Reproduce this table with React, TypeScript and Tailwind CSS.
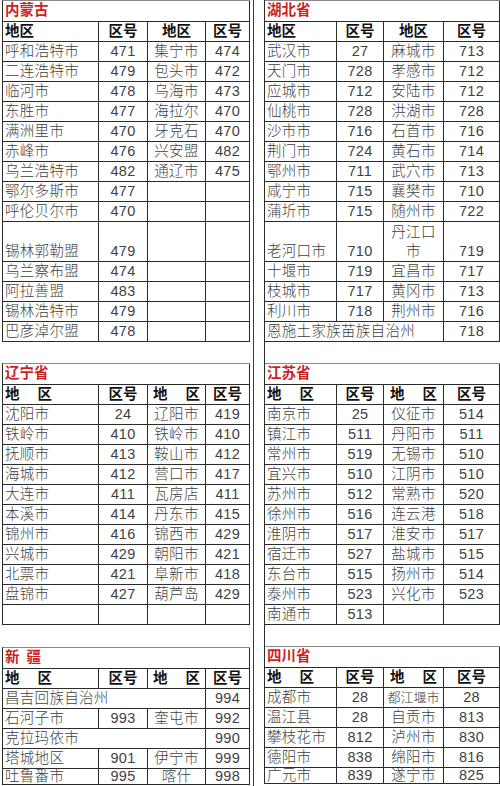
import React from 'react';

type Side = 'left' | 'right';
type RowDef = { c: string[]; h?: 'tall' | 'last'; small?: boolean };
type SectionDef = {
  title: React.ReactNode;
  spaced: boolean;
  rows: RowDef[];
};

const GRID: Record<Side, string> = {
  left: 'grid-cols-[96px_49px_58px_44px]',
  right: 'grid-cols-[72px_47px_60px_56px]',
};

const FONT = "font-['Liberation_Sans','Noto_Sans_CJK_SC',sans-serif]";

const r = (...c: string[]): RowDef => ({ c });

const neimenggu: SectionDef = {
  title: '内蒙古',
  spaced: false,
  rows: [
    r('呼和浩特市', '471', '集宁市', '474'),
    r('二连浩特市', '479', '包头市', '472'),
    r('临河市', '478', '乌海市', '473'),
    r('东胜市', '477', '海拉尔', '470'),
    r('满洲里市', '470', '牙克石', '470'),
    r('赤峰市', '476', '兴安盟', '482'),
    r('乌兰浩特市', '482', '通辽市', '475'),
    r('鄂尔多斯市', '477', '', ''),
    r('呼伦贝尔市', '470', '', ''),
    { c: ['锡林郭勒盟', '479', '', ''], h: 'tall' },
    r('乌兰察布盟', '474', '', ''),
    r('阿拉善盟', '483', '', ''),
    r('锡林浩特市', '479', '', ''),
    r('巴彦淖尔盟', '478', '', ''),
  ],
};

const hubei: SectionDef = {
  title: '湖北省',
  spaced: false,
  rows: [
    r('武汉市', '27', '麻城市', '713'),
    r('天门市', '728', '孝感市', '712'),
    r('应城市', '712', '安陆市', '712'),
    r('仙桃市', '728', '洪湖市', '728'),
    r('沙市市', '716', '石首市', '716'),
    r('荆门市', '724', '黄石市', '714'),
    r('鄂州市', '711', '武穴市', '713'),
    r('咸宁市', '715', '襄樊市', '710'),
    r('蒲圻市', '715', '随州市', '722'),
    { c: ['老河口市', '710', '丹江口\n市', '719'], h: 'tall' },
    r('十堰市', '719', '宜昌市', '717'),
    r('枝城市', '717', '黄冈市', '713'),
    r('利川市', '718', '荆州市', '716'),
    r('恩施土家族苗族自治州', '718'),
  ],
};

const liaoning: SectionDef = {
  title: '辽宁省',
  spaced: true,
  rows: [
    r('沈阳市', '24', '辽阳市', '419'),
    r('铁岭市', '410', '铁岭市', '410'),
    r('抚顺市', '413', '鞍山市', '412'),
    r('海城市', '412', '营口市', '417'),
    r('大连市', '411', '瓦房店', '411'),
    r('本溪市', '414', '丹东市', '415'),
    r('锦州市', '416', '锦西市', '429'),
    r('兴城市', '429', '朝阳市', '421'),
    r('北票市', '421', '阜新市', '418'),
    r('盘锦市', '427', '葫芦岛', '429'),
    r('', '', '', ''),
  ],
};

const jiangsu: SectionDef = {
  title: '江苏省',
  spaced: true,
  rows: [
    r('南京市', '25', '仪征市', '514'),
    r('镇江市', '511', '丹阳市', '511'),
    r('常州市', '519', '无锡市', '510'),
    r('宜兴市', '510', '江阴市', '510'),
    r('苏州市', '512', '常熟市', '520'),
    r('徐州市', '516', '连云港', '518'),
    r('淮阴市', '517', '淮安市', '517'),
    r('宿迁市', '527', '盐城市', '515'),
    r('东台市', '515', '扬州市', '514'),
    r('泰州市', '523', '兴化市', '523'),
    r('南通市', '513', '', ''),
  ],
};

const xinjiang: SectionDef = {
  title: (
    <span className="flex gap-[7px]">
      <span>新</span>
      <span>疆</span>
    </span>
  ),
  spaced: true,
  rows: [
    r('昌吉回族自治州', '994'),
    r('石河子市', '993', '奎屯市', '992'),
    r('克拉玛依市', '990'),
    r('塔城地区', '901', '伊宁市', '999'),
    { c: ['吐鲁番市', '995', '喀什', '998'], h: 'last' },
  ],
};

const sichuan: SectionDef = {
  title: '四川省',
  spaced: true,
  rows: [
    { c: ['成都市', '28', '都江堰市', '28'], small: true },
    r('温江县', '28', '自贡市', '813'),
    r('攀枝花市', '812', '泸州市', '830'),
    r('德阳市', '838', '绵阳市', '816'),
    { c: ['广元市', '839', '遂宁市', '825'], h: 'last' },
  ],
};

function Spaced() {
  return (
    <span className="flex gap-[18px]">
      <span>地</span>
      <span>区</span>
    </span>
  );
}

function Header({ side, spaced }: { side: Side; spaced: boolean }) {
  const cell = 'flex items-center border-r border-[#2b2b2b]';
  return (
    <div className={`grid ${GRID[side]} h-[20px] border-b border-[#2b2b2b] font-bold text-[14.5px] text-[#111] leading-[19px]`}>
      <div className={`${cell} pl-[2px]`}>{spaced ? <Spaced /> : '地区'}</div>
      <div className={`${cell} justify-center`}>区号</div>
      <div className={`${cell} justify-center`}>{spaced ? <Spaced /> : '地区'}</div>
      <div className={`${cell} justify-center`}>区号</div>
    </div>
  );
}

function Row({ side, row }: { side: Side; row: RowDef }) {
  const height = row.h === 'tall' ? 'h-[40px]' : row.h === 'last' ? 'h-[16px]' : 'h-[20px]';
  const lead = row.h === 'last' ? 'leading-[15px]' : 'leading-[19px]';
  const cell = `flex items-end border-r border-[#2b2b2b] overflow-hidden whitespace-nowrap ${lead}`;
  const span = row.c.length === 2;
  return (
    <div className={`grid ${GRID[side]} ${height} border-b border-[#2b2b2b] text-[14.5px] font-light tracking-[0.3px] text-[#3f3f3f]`}>
      {span ? (
        <>
          <div className={`${cell} col-span-3 pl-[2px]`}>{row.c[0]}</div>
          <div className={`${cell} justify-center`}>{row.c[1]}</div>
        </>
      ) : (
        row.c.map((t, i) => (
          <div
            key={i}
            className={`${cell} ${i === 0 ? 'pl-[2px]' : 'justify-center'} ${
              i === 2 && t.includes('\n') ? 'whitespace-pre-line text-center' : ''
            } ${i === 2 && row.small ? 'text-[13px] tracking-normal' : ''}`}
          >
            {t}
          </div>
        ))
      )}
    </div>
  );
}

function Section({ side, data }: { side: Side; data: SectionDef }) {
  return (
    <div className={`${side === 'left' ? 'border-l border-[#2b2b2b]' : ''} border-t border-t-[#8a8a8a]`}>
      <div className="flex h-[21px] items-center border-b border-r border-[#2b2b2b] pl-[2px] text-[14.5px] font-bold text-[#cc1f1f]">
        {data.title}
      </div>
      <Header side={side} spaced={data.spaced} />
      {data.rows.map((row, i) => (
        <Row key={i} side={side} row={row} />
      ))}
    </div>
  );
}

export default function App() {
  return (
    <div className={`flex h-[786px] w-[500px] overflow-hidden bg-white ${FONT}`}>
      <div className="w-[250px] pl-[2px]">
        <Section side="left" data={neimenggu} />
        <div className="h-[21px]" />
        <Section side="left" data={liaoning} />
        <div className="h-[22px]" />
        <Section side="left" data={xinjiang} />
      </div>
      <div className="ml-[3px] w-px bg-[#3a3a3a]" />
      <div className="ml-[10px] w-[236px] self-start border-l border-[#2b2b2b]">
        <Section side="right" data={hubei} />
        <div className="h-[21px]" />
        <Section side="right" data={jiangsu} />
        <div className="h-[21px]" />
        <Section side="right" data={sichuan} />
      </div>
    </div>
  );
}
